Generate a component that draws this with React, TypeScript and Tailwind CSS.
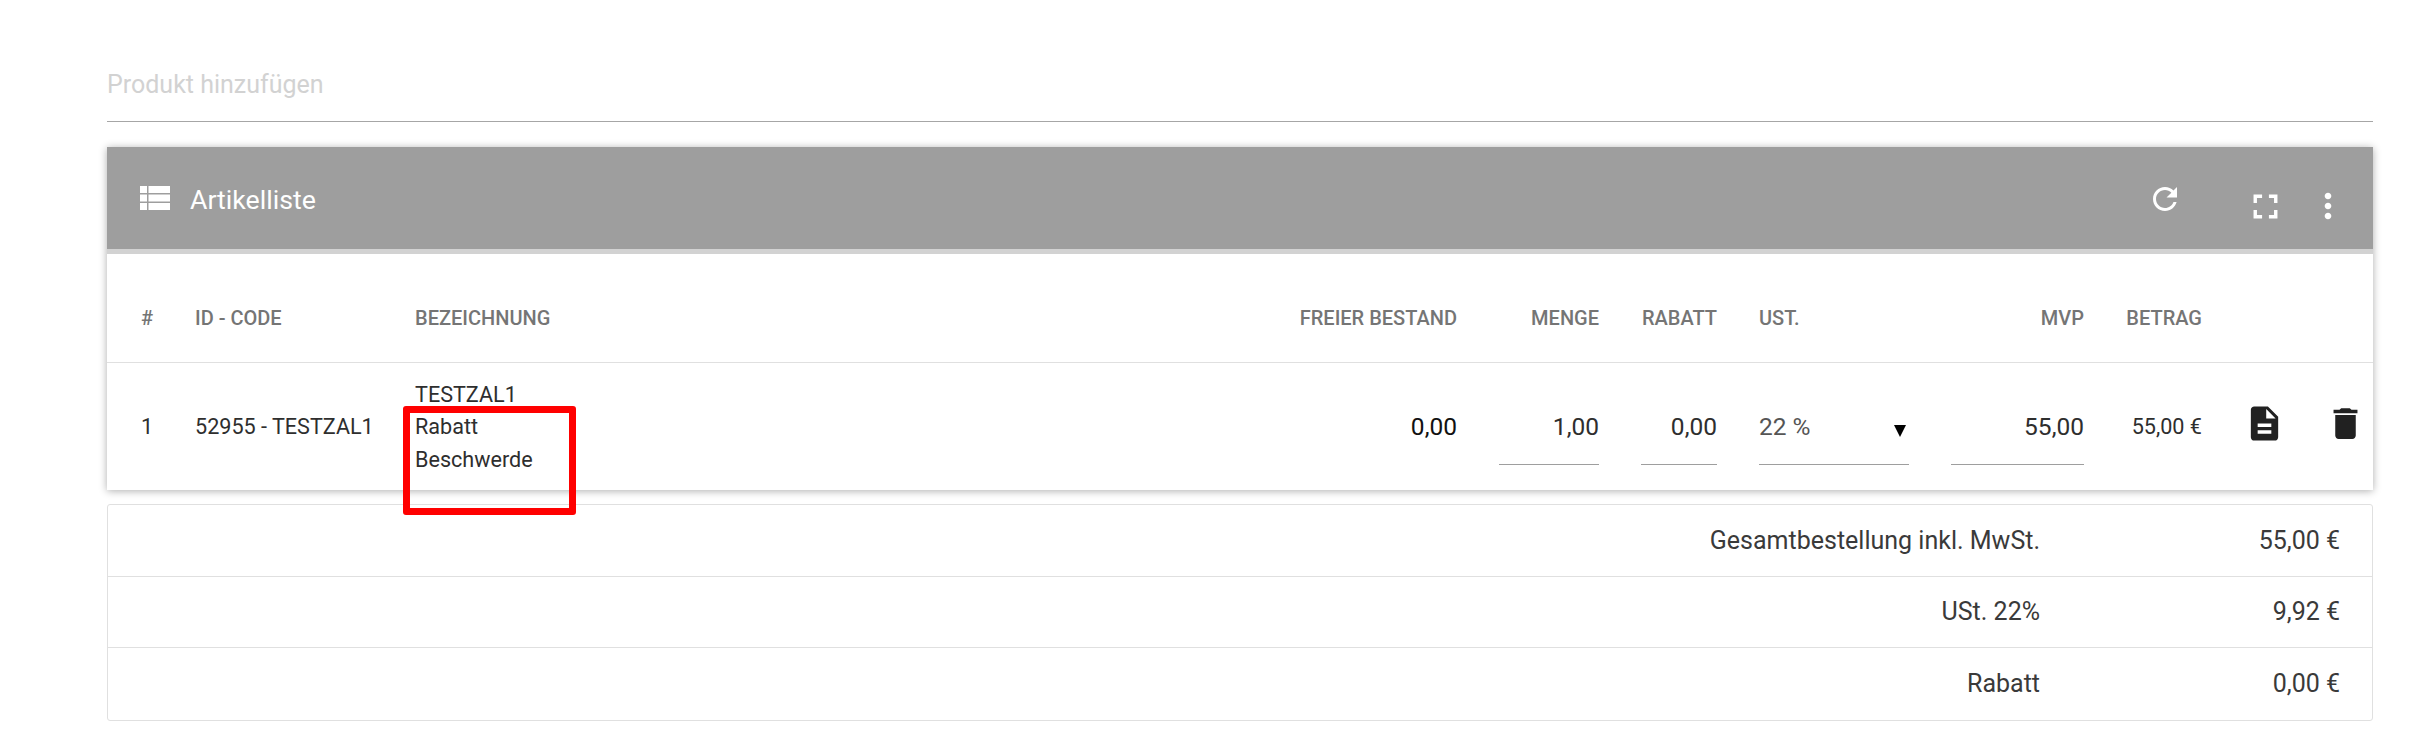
import React from "react";

const GRID = "grid grid-cols-[12px_178px_820px_180px_100px_76px_150px_133px_76px_130px] gap-x-[42px] pl-[34px]";

function MatIcon({ d, className }: { d: string; className: string }) {
  return (
    <svg viewBox="0 0 24 24" fill="currentColor" className={className}>
      <path d={d} />
    </svg>
  );
}

const ICONS = {
  refresh:
    "M17.65 6.35C16.2 4.9 14.21 4 12 4c-4.42 0-7.99 3.58-7.99 8s3.57 8 7.99 8c3.73 0 6.84-2.55 7.73-6h-2.08c-.82 2.33-3.04 4-5.65 4-3.31 0-6-2.69-6-6s2.69-6 6-6c1.66 0 3.14.69 4.22 1.78L13 11h7V4l-2.35 2.35z",
  fullscreen:
    "M7 14H5v5h5v-2H7v-3zm-2-4h2V7h3V5H5v5zm12 7h-3v2h5v-5h-2v3zM14 5v2h3v3h2V5h-5z",
  more:
    "M12 8c1.1 0 2-.9 2-2s-.9-2-2-2-2 .9-2 2 .9 2 2 2zm0 2c-1.1 0-2 .9-2 2s.9 2 2 2 2-.9 2-2-.9-2-2-2zm0 6c-1.1 0-2 .9-2 2s.9 2 2 2 2-.9 2-2-.9-2-2-2z",
  doc:
    "M14 2H6c-1.1 0-1.99.9-1.99 2L4 20c0 1.1.89 2 1.99 2H18c1.1 0 2-.9 2-2V8l-6-6zm2 16H8v-2h8v2zm0-4H8v-2h8v2zm-3-5V3.5L18.5 9H13z",
  trash:
    "M6 19c0 1.1.9 2 2 2h8c1.1 0 2-.9 2-2V7H6v12zM19 4h-3.5l-1-1h-5l-1 1H5v2h14V4z",
};

function TableIcon() {
  return (
    <svg viewBox="0 0 30 24" fill="white" className="w-[30px] h-[24px] shrink-0">
      <rect x="0" y="0" width="7" height="7" />
      <rect x="8.5" y="0" width="21.5" height="7" />
      <rect x="0" y="8.5" width="7" height="7" />
      <rect x="8.5" y="8.5" width="21.5" height="7" />
      <rect x="0" y="17" width="7" height="7" />
      <rect x="8.5" y="17" width="21.5" height="7" />
    </svg>
  );
}

function Th({ children, right }: { children: React.ReactNode; right?: boolean }) {
  return (
    <div className={`text-[20px] font-medium text-[#757575] whitespace-nowrap ${right ? "text-right" : ""}`}>
      {children}
    </div>
  );
}

function NumInput({ value }: { value: string }) {
  return (
    <div className="self-start h-[100px] pt-[42px] border-b border-[#9e9e9e] text-right text-[24.5px] text-[#2e2e2e] leading-[40px]">
      {value}
    </div>
  );
}

function SumRow({ label, value, last }: { label: string; value: string; last?: boolean }) {
  return (
    <div className={`flex items-center justify-end h-[71.5px] text-[25px] text-[#3a3a3a] ${last ? "" : "border-b border-[#e0e0e0]"}`}>
      <div className="text-right">{label}</div>
      <div className="w-[332px] pr-[32px] text-right">{value}</div>
    </div>
  );
}

export default function App() {
  return (
    <div className="relative w-[2423px] h-[751px] bg-white pl-[107px] pr-[50px] pt-[61px] overflow-hidden font-['Roboto',sans-serif]">
      <div className="h-[61px] border-b border-[#a6a6a6] text-[25px] leading-[48px] text-[#d2d2d2]">
        Produkt hinzufügen
      </div>

      <div className="mt-[25px] bg-white shadow-[0_1px_8px_rgba(0,0,0,0.32)]">
        <div className="h-[102px] bg-[#9e9e9e] flex items-center pl-[33px] text-white">
          <TableIcon />
          <div className="ml-[20px] text-[26.7px] pt-[5px]">Artikelliste</div>
          <div className="ml-auto flex items-start text-white h-[60px]">
            <MatIcon d={ICONS.refresh} className="w-[36px] h-[36px] mt-[13px]" />
            <MatIcon d={ICONS.fullscreen} className="w-[41px] h-[41px] ml-[62px] mt-[18px]" />
            <MatIcon d={ICONS.more} className="w-[40px] h-[40px] ml-[22px] mr-[25px] mt-[18px]" />
          </div>
        </div>
        <div className="h-[5px] bg-[#d2d2d2]" />

        <div className={`${GRID} h-[109px] items-center border-b border-[#e0e0e0] pt-[20px]`}>
          <Th>#</Th>
          <Th>ID - CODE</Th>
          <Th>BEZEICHNUNG</Th>
          <Th right>FREIER BESTAND</Th>
          <Th right>MENGE</Th>
          <Th right>RABATT</Th>
          <Th>UST.</Th>
          <Th right>MVP</Th>
          <Th right>BETRAG</Th>
          <div />
        </div>

        <div className={`${GRID} h-[127px] pt-[2px] items-center text-[21.6px] text-[#2e2e2e]`}>
          <div>1</div>
          <div className="whitespace-nowrap">52955 - TESTZAL1</div>
          <div className="leading-[32.5px]">
            <div>TESTZAL1</div>
            <div>Rabatt</div>
            <div>Beschwerde</div>
          </div>
          <div className="text-right text-[24.5px] text-[#111]">0,00</div>
          <NumInput value="1,00" />
          <NumInput value="0,00" />
          <div className="relative self-start h-[100px] pt-[42px] border-b border-[#9e9e9e] text-[24.5px] leading-[40px] text-[#555]">
            22 %
            <span className="absolute right-[3px] top-[60px] w-0 h-0 border-x-[6px] border-x-transparent border-t-[12px] border-t-black" />
          </div>
          <NumInput value="55,00" />
          <div className="text-right whitespace-nowrap">55,00 €</div>
          <div className="flex items-start h-[60px] text-[#212121]">
            <MatIcon d={ICONS.doc} className="w-[41px] h-[41px] shrink-0 mt-[5px]" />
            <MatIcon d={ICONS.trash} className="w-[41px] h-[41px] shrink-0 ml-[40px] mt-[5px]" />
          </div>
        </div>
      </div>

      <div className="mt-[14px] border border-[#e0e0e0] rounded-[3px]">
        <SumRow label="Gesamtbestellung inkl. MwSt." value="55,00 €" />
        <SumRow label="USt. 22%" value="9,92 €" />
        <SumRow label="Rabatt" value="0,00 €" last />
      </div>

      <div className="absolute left-[403px] top-[406px] w-[173px] h-[109px] border-[7px] border-[#ff0000] rounded-[3px]" />
    </div>
  );
}
